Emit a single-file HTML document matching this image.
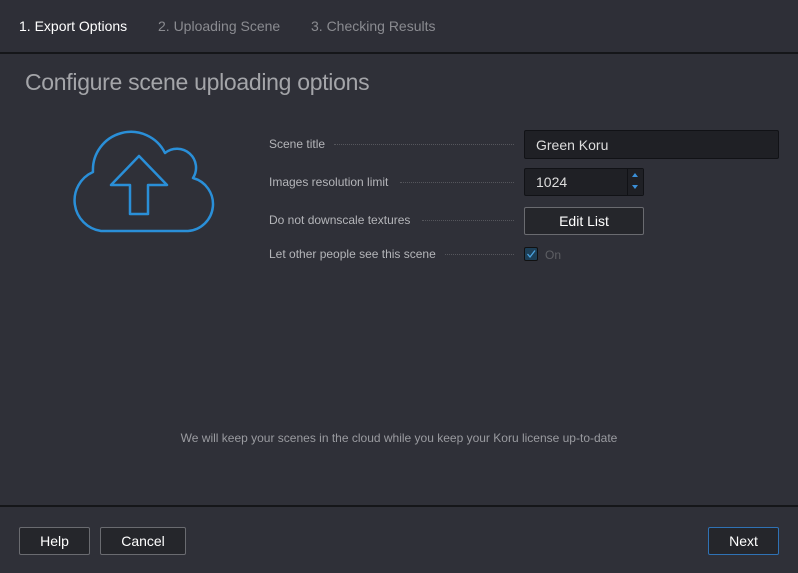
<!DOCTYPE html>
<html><head><meta charset="utf-8"><style>
*{margin:0;padding:0;box-sizing:border-box}
body{width:798px;height:573px;background:#2f3038;font-family:"Liberation Sans",sans-serif;position:relative;overflow:hidden;color:#aaa}
.top{position:absolute;left:0;top:0;width:798px;height:54px;background:#2e2f37;border-bottom:2px solid #151619}
.tab{position:absolute;top:18px;font-size:14px;color:#8a8b90}
h1{position:absolute;left:25px;top:69px;font-size:23px;font-weight:normal;color:#a4a5a9;letter-spacing:-0.3px}
.lbl{position:absolute;left:269px;font-size:12px;color:#b4b5b9;display:flex;align-items:center}
.dots{position:absolute;border-top:1px dotted #55565c;height:0}
.inp{position:absolute;background:#1f2025;border:1px solid #111216;border-radius:2px;color:#ddd;font-size:14px;padding-left:11px;display:flex;align-items:center}
.btn{position:absolute;background:#25262b;border:1px solid #6a6b70;border-radius:2px;color:#fff;font-size:14px;display:flex;align-items:center;justify-content:center}
.foot{position:absolute;left:0;top:505px;width:798px;height:2px;background:#151619}
</style></head><body>
<div class="top">
<div class="tab" style="left:19px;color:#fff">1. Export Options</div>
<div class="tab" style="left:158px">2. Uploading Scene</div>
<div class="tab" style="left:311px">3. Checking Results</div>
</div>
<h1>Configure scene uploading options</h1>
<svg style="position:absolute;left:0;top:0" width="300" height="260">
<path d="M101,231 A31,31 0 0 1 93,172 A38,38 0 0 1 165,153 A19,19 0 0 1 193,178 A27,27 0 0 1 188,231 Z" fill="none" stroke="#2a8fd8" stroke-width="2.5" stroke-linejoin="round"/>
<path d="M139,156 L167,185 L148,185 L148,214 L130,214 L130,185 L111,185 Z" fill="none" stroke="#2a8fd8" stroke-width="2.5" stroke-linejoin="round"/>
</svg>
<div class="lbl" style="top:137px">Scene title</div><div class="dots" style="left:334px;width:180px;top:144px"></div>
<div class="lbl" style="top:175px">Images resolution limit</div><div class="dots" style="left:400px;width:114px;top:182px"></div>
<div class="lbl" style="top:213px">Do not downscale textures</div><div class="dots" style="left:422px;width:92px;top:220px"></div>
<div class="lbl" style="top:247px">Let other people see this scene</div><div class="dots" style="left:445px;width:69px;top:254px"></div>
<div class="inp" style="left:524px;top:130px;width:255px;height:29px">Green Koru</div>
<div class="inp" style="left:524px;top:168px;width:120px;height:28px">1024</div>
<div style="position:absolute;left:627px;top:169px;width:16px;height:26px;border-left:1px solid #111216;background:#1f2025"></div>
<svg style="position:absolute;left:630px;top:172px" width="10" height="20"><path d="M2,5 L5,1 L8,5Z M2,13 L5,17 L8,13Z" fill="#3a8fd8"/></svg>
<div class="btn" style="left:524px;top:207px;width:120px;height:28px">Edit List</div>
<div style="position:absolute;left:524px;top:247px;width:14px;height:14px;background:#1d3f57;border:1px solid #111;border-radius:2px"></div>
<svg style="position:absolute;left:524px;top:247px" width="14" height="14"><path d="M3.5,7 L6,10 L11,3.5" fill="none" stroke="#4aa3e0" stroke-width="1.3"/></svg>
<div style="position:absolute;left:545px;top:248px;font-size:12px;color:#5e5f64">On</div>
<div style="position:absolute;left:0;width:798px;top:431px;text-align:center;font-size:12px;color:#9a9ba0">We will keep your scenes in the cloud while you keep your Koru license up-to-date</div>
<div class="foot"></div>
<div class="btn" style="left:19px;top:527px;width:71px;height:28px">Help</div>
<div class="btn" style="left:100px;top:527px;width:86px;height:28px">Cancel</div>
<div class="btn" style="left:708px;top:527px;width:71px;height:28px;border-color:#2f72b5">Next</div>
</body></html>
